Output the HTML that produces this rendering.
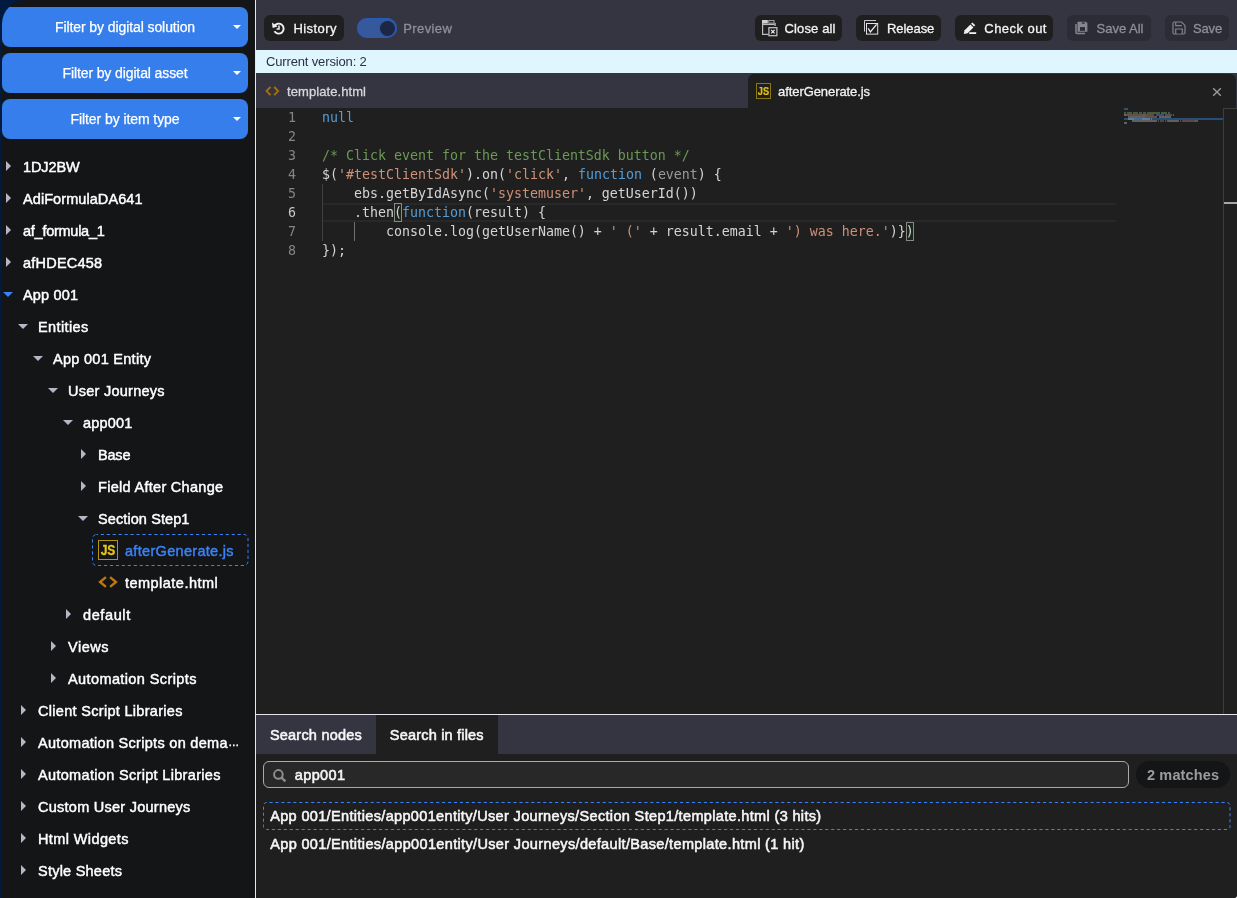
<!DOCTYPE html>
<html lang="en">
<head>
<meta charset="utf-8">
<title>Code editor</title>
<style>
*{box-sizing:border-box;margin:0;padding:0}
html,body{width:1237px;height:898px;overflow:hidden;background:#001a40;font-family:"Liberation Sans",sans-serif;color:#f2f2f5}
body{position:relative}
#side,#main{will-change:transform}
.abs{position:absolute}
/* ---------- sidebar ---------- */
#side{position:absolute;left:2px;top:0;width:253px;height:898px;background:#141517;border-top-left-radius:24px;overflow:hidden}
.fbtn{position:absolute;left:0;width:246px;height:40px;border-radius:8px;background:#357eec;color:#fff;font-size:14px;line-height:41px;text-align:center;padding-right:0;-webkit-text-stroke:.25px #fff}
.fbtn span{position:absolute;left:0;width:246px;text-align:center}
.fbtn u{text-decoration:none}
.fbtn i{position:absolute;left:231px;top:18px;width:0;height:0;border-left:4px solid transparent;border-right:4px solid transparent;border-top:4.5px solid #fff}
.row{position:absolute;left:0;width:253px;height:32px;line-height:32px;font-size:14.5px;white-space:nowrap;color:#fff;-webkit-text-stroke:.45px #fff}
.row b{font-weight:normal;position:absolute;top:0}
.ar,.ad{position:absolute;width:0;height:0}
.ar{top:10px;margin-left:-1.2px;border-top:5.25px solid transparent;border-bottom:5.25px solid transparent;border-left:5.5px solid #b6b6c6}
.ad{top:12.7px;margin-left:-.4px;border-left:5.4px solid transparent;border-right:5.4px solid transparent;border-top:5.7px solid #b6b6c6}
.sel{position:absolute;left:90px;top:0;width:156px;height:32px;border:1px dashed #3b82f6;border-radius:5px}
.jsi{position:absolute;left:96px;top:5px;width:20px;height:20px;border:1px solid #b3920f;font-style:normal}
.jsi em{position:absolute;left:-1px;top:0;width:20px;height:18px;line-height:18.6px;text-align:center;font-style:normal;font-weight:bold;font-size:14px;color:#e8c51b;-webkit-text-stroke:.3px #e8c51b;letter-spacing:0;transform:scaleX(.86)}
.hti{position:absolute;left:96px;top:9.4px}
/* ---------- main ---------- */
#vdiv{position:absolute;left:255px;top:0;width:1px;height:898px;background:#e6e6f0}
#main{position:absolute;left:256px;top:0;width:981px;height:898px;background:#1f1f1f;border-bottom-right-radius:3px;overflow:hidden}
#tb{position:absolute;left:0;top:0;width:981px;height:50px;background:#343541}
.btn{position:absolute;top:15px;height:26px;border-radius:6px;background:#1f1f1f;color:#f4f4f6;font-size:13px;line-height:27.8px;white-space:nowrap;-webkit-text-stroke:.3px #f4f4f6}
.btn.dis{background:#2b2c35;color:#8e8e9c;-webkit-text-stroke:.3px #8e8e9c}
.btn span{position:absolute;top:0}
.btn svg{position:absolute}
#banner{position:absolute;left:0;top:50px;width:981px;height:23px;background:#e0f6ff;color:#2b3140;font-size:13px;line-height:23px;padding-left:10px}
#tabs{position:absolute;left:0;top:73px;width:981px;height:35px;background:#343541}
.tt{position:absolute;top:0;height:35px;line-height:37.2px;font-size:13px;white-space:nowrap;color:#f2f2f4;-webkit-text-stroke:.3px #f2f2f4}
#ed{position:absolute;left:0;top:108px;width:981px;height:606px;background:#1f1f1f;font-family:"DejaVu Sans Mono","Liberation Mono",monospace;font-size:13.29px;color:#d4d4d4}
.ln{position:absolute;left:0;width:40px;text-align:right;height:19px;line-height:19.7px;color:#858585}
.cl{position:absolute;left:66px;height:19px;line-height:19.7px;white-space:pre}
#mm{position:absolute;left:868px;top:0;width:99px;height:606px}
#mm i{position:absolute;height:2px}
.dim{opacity:.67}
.k{color:#569cd6}.s{color:#ce9178}.c{color:#6a9955}
.bt{position:absolute;font-size:14.5px;white-space:nowrap;color:#f6f6f8;-webkit-text-stroke:.55px #f6f6f8}
#hdiv{position:absolute;left:0;top:714px;width:981px;height:1px;background:#e6e6f0}
#bp{position:absolute;left:0;top:715px;width:981px;height:183px;background:#1f1f1f;border-bottom-right-radius:3px}
</style>
</head>
<body>
<div id="side">
  <div class="fbtn" style="top:7px"><span><u style="--w:139.7;letter-spacing:-0.088px">Filter by digital solution</u></span><i></i></div>
  <div class="fbtn" style="top:53px"><span><u style="--w:124.6;letter-spacing:-0.114px">Filter by digital asset</u></span><i></i></div>
  <div class="fbtn" style="top:99px"><span><u style="--w:108.6;letter-spacing:-0.077px">Filter by item type</u></span><i></i></div>
  <div id="tree">
<div class="row" style="top:151px"><i class="ar" style="left:5px"></i><b style="left:21px;--w:56.2;letter-spacing:-0.104px">1DJ2BW</b></div>
<div class="row" style="top:183px"><i class="ar" style="left:5px"></i><b style="left:21px;--w:119;letter-spacing:0.073px">AdiFormulaDA641</b></div>
<div class="row" style="top:215px"><i class="ar" style="left:5px"></i><b style="left:21px;--w:81.3;letter-spacing:-0.258px">af_formula_1</b></div>
<div class="row" style="top:247px"><i class="ar" style="left:5px"></i><b style="left:21px;--w:78.6;letter-spacing:0.216px">afHDEC458</b></div>
<div class="row" style="top:279px"><i class="ad" style="left:1.5px;border-top-color:#3b82f6"></i><b style="left:21px;--w:54.5;letter-spacing:0.161px">App 001</b></div>
<div class="row" style="top:311px"><i class="ad" style="left:16.5px"></i><b style="left:36px;--w:49.8;letter-spacing:0.391px">Entities</b></div>
<div class="row" style="top:343px"><i class="ad" style="left:31.5px"></i><b style="left:51px;--w:97.5;letter-spacing:0.282px">App 001 Entity</b></div>
<div class="row" style="top:375px"><i class="ad" style="left:46.5px"></i><b style="left:66px;--w:96.1;letter-spacing:0.260px">User Journeys</b></div>
<div class="row" style="top:407px"><i class="ad" style="left:61.5px"></i><b style="left:81px;--w:48.9;letter-spacing:0.202px">app001</b></div>
<div class="row" style="top:439px"><i class="ar" style="left:80px"></i><b style="left:96px;--w:32.0;letter-spacing:-0.188px">Base</b></div>
<div class="row" style="top:471px"><i class="ar" style="left:80px"></i><b style="left:96px;--w:124.6;letter-spacing:0.294px">Field After Change</b></div>
<div class="row" style="top:503px"><i class="ad" style="left:76.5px"></i><b style="left:96px;--w:90.9;letter-spacing:0.092px">Section Step1</b></div>
<div class="row" style="top:535px"><svg class="abs" style="left:90px;top:-1px" width="157" height="32" viewBox="0 0 157 32"><rect x=".5" y=".5" width="155.5" height="31" rx="4" fill="none" stroke="#3b82f6" stroke-width="1" stroke-dasharray="3.2 2.75" stroke-dashoffset="1.7"/></svg><i class="jsi"><em>JS</em></i><b style="left:123px;color:#3b82f6;-webkit-text-stroke-color:#3b82f6;--w:108.1;letter-spacing:0.308px">afterGenerate.js</b></div>
<div class="row" style="top:567px"><svg class="hti" width="20" height="12" viewBox="0 0 20 12"><path d="M7.9 1.2 L2.1 6 L7.9 10.8 M12.1 1.2 L17.9 6 L12.1 10.8" fill="none" stroke="#bf780e" stroke-width="2.4"/></svg><b style="left:123px;--w:92.2;letter-spacing:0.471px">template.html</b></div>
<div class="row" style="top:599px"><i class="ar" style="left:65px"></i><b style="left:81px;--w:46.7;letter-spacing:0.609px">default</b></div>
<div class="row" style="top:631px"><i class="ar" style="left:50px"></i><b style="left:66px;--w:40.0;letter-spacing:0.520px">Views</b></div>
<div class="row" style="top:663px"><i class="ar" style="left:50px"></i><b style="left:66px;--w:127.9;letter-spacing:0.394px">Automation Scripts</b></div>
<div class="row" style="top:695px"><i class="ar" style="left:20px"></i><b style="left:36px;--w:144.0;letter-spacing:0.304px">Client Script Libraries</b></div>
<div class="row" style="top:727px"><i class="ar" style="left:20px"></i><b style="left:36px;--w:189;letter-spacing:0.294px">Automation Scripts on dema</b><b style="left:226.3px;top:-1px;font-size:11px;letter-spacing:0">…</b></div>
<div class="row" style="top:759px"><i class="ar" style="left:20px"></i><b style="left:36px;--w:182.0;letter-spacing:0.324px">Automation Script Libraries</b></div>
<div class="row" style="top:791px"><i class="ar" style="left:20px"></i><b style="left:36px;--w:151.8;letter-spacing:0.254px">Custom User Journeys</b></div>
<div class="row" style="top:823px"><i class="ar" style="left:20px"></i><b style="left:36px;--w:90.0;letter-spacing:0.389px">Html Widgets</b></div>
<div class="row" style="top:855px"><i class="ar" style="left:20px"></i><b style="left:36px;--w:83.5;letter-spacing:0.234px">Style Sheets</b></div>
  </div>
</div>
<div id="vdiv"></div>
<div class="abs" style="left:1231px;top:892px;width:6px;height:6px;background:#fff"></div>
<div id="main">
  <div id="tb">
    <div class="btn" style="left:8px;width:80px">
      <svg style="left:7px;top:6px" width="15" height="15" viewBox="0 0 15 15"><path d="M3.3 5.2 A5 5 0 1 1 3.4 10.3" fill="none" stroke="#f0f0f3" stroke-width="1.9"/><path d="M1 1.6 L1.6 6.9 L6.6 5.6 Z" fill="#f0f0f3"/><path d="M8 4.6 V8 H5.6" fill="none" stroke="#f0f0f3" stroke-width="1.5"/></svg>
      <span style="left:29.4px;--w:42.6;letter-spacing:0.441px">History</span></div>
    <div class="abs" style="left:101px;top:18px;width:40px;height:20px;border-radius:10px;background:#36599e;box-shadow:inset 0 0 0 1px #2859b4"><div class="abs" style="left:22.5px;top:2.5px;width:15px;height:15px;border-radius:8px;background:#1c2745;box-shadow:0 0 0 1px #2f55a0"></div></div>
    <div class="abs" style="left:147.3px;top:15px;height:26px;line-height:27.8px;font-size:13px;color:#8e8e9c;-webkit-text-stroke:.3px #8e8e9c;--w:48;letter-spacing:0.375px">Preview</div>
    <div class="btn" style="left:499px;width:87px">
      <svg style="left:7px;top:5px" width="16" height="17" viewBox="0 0 16 17"><path d="M.6 .4 V14.4 H6.4" fill="none" stroke="#bcbcc2" stroke-width="1.2"/><rect x=".1" y="-.1" width="5.7" height="3.6" fill="#d2d2d6"/><rect x="6.8" y=".4" width="5.2" height="2.7" fill="none" stroke="#b4b4ba" stroke-width=".9"/><path d="M0 4.4 H12.6" stroke="#bcbcc2" stroke-width="1.3"/><path d="M13.1 2.9 V6" stroke="#e0e0e4" stroke-width="1"/><rect x="6.9" y="7.7" width="8" height="8" fill="none" stroke="#c6c6ca" stroke-width="1.2"/><path d="M9.2 10 L12.6 13.4 M12.6 10 L9.2 13.4" stroke="#e6e6ea" stroke-width="1.2"/></svg>
      <span style="left:29.5px;--w:50.5;letter-spacing:0.143px">Close all</span></div>
    <div class="btn" style="left:600px;width:85px">
      <svg style="left:8px;top:5px" width="15" height="15" viewBox="0 0 15 15"><path d="M.5 11.6 V.5 H12" fill="none" stroke="#c8c8ce" stroke-width="1"/><rect x="2.5" y="3.5" width="11.2" height="10.6" fill="none" stroke="#e2e2e6" stroke-width="1"/><path d="M4.2 8.4 L6.4 12 L12.6 4.4" fill="none" stroke="#f0f0f3" stroke-width="1.3"/></svg>
      <span style="left:31.0px;--w:46.8;letter-spacing:-0.067px">Release</span></div>
    <div class="btn" style="left:699px;width:98px">
      <svg style="left:8px;top:7px" width="14" height="13" viewBox="0 0 14 13"><path d="M.8 12 L1.6 8.2 L7.4 2.4 L10.4 5.4 L4.6 11.2 Z" fill="#f0f0f3"/><path d="M8.1 1.7 L9.4 .4 L12.3 3.3 L11 4.6 Z" fill="#f0f0f3"/><path d="M6.2 11.1 H13.2" stroke="#f0f0f3" stroke-width="1.8"/></svg>
      <span style="left:29.3px;--w:61.7;letter-spacing:0.457px">Check out</span></div>
    <div class="btn dis" style="left:811px;width:84px">
      <svg style="left:8px;top:6px" width="13" height="14" viewBox="0 0 13 14"><path d="M1 3 V11.6 Q1 12.6 2 12.6 H10" fill="none" stroke="#868692" stroke-width="1.5"/><path d="M2.5 .7 H11 L12.4 2.1 V10.8 H2.5 Z" fill="#868692"/><rect x="6.8" y="1.4" width="3" height="1.3" fill="#2b2c35"/><rect x="5" y="6.1" width="5" height="3.7" fill="#2b2c35"/></svg>
      <span style="left:29.5px;--w:46.5;letter-spacing:0.002px">Save All</span></div>
    <div class="btn dis" style="left:909px;width:64px">
      <svg style="left:7px;top:6px" width="14" height="14" viewBox="0 0 14 14"><path d="M1 2.4 Q1 1 2.4 1 H9.6 L13 4.4 V11.6 Q13 13 11.6 13 H2.4 Q1 13 1 11.6 Z" fill="none" stroke="#82828e" stroke-width="1.2"/><path d="M3.7 1.2 V4.6 H9.8 M3.7 12.8 V8 H10.3 V12.8" fill="none" stroke="#82828e" stroke-width="1.2"/><rect x="5.4" y="9.4" width="3.2" height="3" fill="#22232b"/></svg>
      <span style="left:28.0px;--w:28.7;letter-spacing:-0.147px">Save</span></div>
  </div>
  <div id="banner"><span style="--w:100.3;letter-spacing:-0.149px">Current version: 2</span></div>
  <div id="tabs">
    <svg class="abs" style="left:9px;top:12px" width="16" height="12" viewBox="0 0 16 12"><path d="M5.5 1.9 L1.6 6.05 L5.5 10.2 M9.2 1.9 L13.1 6.05 L9.2 10.2" fill="none" stroke="#ad6e0e" stroke-width="1.9"/></svg>
    <div class="tt" style="left:31px;color:#d6d6dc;-webkit-text-stroke-color:#d6d6dc;--w:78.5;letter-spacing:0.079px">template.html</div>
    <div class="abs" style="left:492px;top:1px;width:488px;height:34px;background:#1f1f1f;border-radius:6px 6px 0 0"></div>
    <div class="abs" style="left:500px;top:10px;width:15px;height:16px;border:1px solid #8c7810"><div class="abs" style="left:-1px;top:0;width:15px;height:14px;line-height:14.6px;text-align:center;font-weight:bold;font-size:10.5px;color:#e2c114;-webkit-text-stroke:.2px #e2c114;transform:scaleX(.88)">JS</div></div>
    <div class="tt" style="left:522px;--w:91.6;letter-spacing:-0.075px">afterGenerate.js</div>
    <svg class="abs" style="left:956px;top:14px" width="10" height="10" viewBox="0 0 10 10"><path d="M1.2 1.2 L8.8 8.8 M8.8 1.2 L1.2 8.8" stroke="#9a9a9a" stroke-width="1.4"/></svg>
  </div>
  <div id="ed">
    <div class="abs" style="left:66px;top:95px;width:794px;height:19px;border-top:2px solid #282828;border-bottom:2px solid #282828"></div>
    <div class="abs" style="left:66px;top:76px;width:1px;height:57px;background:#404040"></div>
    <div class="abs" style="left:98px;top:114px;width:1px;height:19px;background:#707070"></div>
    <div class="abs" style="left:138px;top:95px;width:8px;height:19px;border:1px solid #888;background:rgba(0,100,0,.1)"></div>
    <div class="abs" style="left:650px;top:114px;width:8px;height:19px;border:1px solid #888;background:rgba(0,100,0,.1)"></div>
    <div class="ln" style="top:0px;color:#858585">1</div><div class="cl" style="top:0px"><span class="k">null</span></div>
    <div class="ln" style="top:19px;color:#858585">2</div><div class="cl" style="top:19px"></div>
    <div class="ln" style="top:38px;color:#858585">3</div><div class="cl" style="top:38px"><span class="c">/* Click event for the testClientSdk button */</span></div>
    <div class="ln" style="top:57px;color:#858585">4</div><div class="cl" style="top:57px">$(<span class="s">'#testClientSdk'</span>).on(<span class="s">'click'</span>, <span class="k">function</span> (<span class="dim">event</span>) {</div>
    <div class="ln" style="top:76px;color:#858585">5</div><div class="cl" style="top:76px">    ebs.getByIdAsync(<span class="s">'systemuser'</span>, getUserId())</div>
    <div class="ln" style="top:95px;color:#c6c6c6">6</div><div class="cl" style="top:95px">    .then(<span class="k">function</span>(result) {</div>
    <div class="ln" style="top:114px;color:#858585">7</div><div class="cl" style="top:114px">        console.log(getUserName() + <span class="s">' ('</span> + result.email + <span class="s">') was here.'</span>)})</div>
    <div class="ln" style="top:133px;color:#858585">8</div><div class="cl" style="top:133px">});</div>
    <div id="mm">
      <div class="abs" style="left:0;top:10px;width:99px;height:2px;background:#264f78"></div>
      <i style="left:0px;top:0px;width:4px;background:#569cd6;opacity:0.39"></i>
      <i style="left:0px;top:4px;width:2px;background:#6a9955;opacity:.5"></i>
      <i style="left:3px;top:4px;width:5px;background:#6a9955;opacity:.5"></i>
      <i style="left:9px;top:4px;width:5px;background:#6a9955;opacity:.5"></i>
      <i style="left:15px;top:4px;width:3px;background:#6a9955;opacity:.5"></i>
      <i style="left:19px;top:4px;width:3px;background:#6a9955;opacity:.5"></i>
      <i style="left:23px;top:4px;width:13px;background:#6a9955;opacity:.5"></i>
      <i style="left:37px;top:4px;width:6px;background:#6a9955;opacity:.5"></i>
      <i style="left:44px;top:4px;width:2px;background:#6a9955;opacity:.5"></i>
      <i style="left:0px;top:6px;width:2px;background:#d4d4d4;opacity:0.39"></i>
      <i style="left:2px;top:6px;width:16px;background:#ce9178;opacity:0.41"></i>
      <i style="left:18px;top:6px;width:5px;background:#d4d4d4;opacity:0.33"></i>
      <i style="left:23px;top:6px;width:7px;background:#ce9178;opacity:0.39"></i>
      <i style="left:32px;top:6px;width:8px;background:#569cd6;opacity:0.41"></i>
      <i style="left:41px;top:6px;width:7px;background:#d4d4d4;opacity:0.28"></i>
      <i style="left:49px;top:6px;width:1px;background:#d4d4d4;opacity:0.33"></i>
      <i style="left:4px;top:8px;width:17px;background:#d4d4d4;opacity:0.36"></i>
      <i style="left:21px;top:8px;width:12px;background:#ce9178;opacity:0.41"></i>
      <i style="left:35px;top:8px;width:12px;background:#d4d4d4;opacity:0.36"></i>
      <i style="left:4px;top:10px;width:6px;background:#d4d4d4;opacity:0.33"></i>
      <i style="left:10px;top:10px;width:8px;background:#569cd6;opacity:0.39"></i>
      <i style="left:18px;top:10px;width:8px;background:#d4d4d4;opacity:0.33"></i>
      <i style="left:27px;top:10px;width:1px;background:#d4d4d4;opacity:0.33"></i>
      <i style="left:8px;top:12px;width:25px;background:#d4d4d4;opacity:0.36"></i>
      <i style="left:34px;top:12px;width:1px;background:#d4d4d4;opacity:0.28"></i>
      <i style="left:36px;top:12px;width:4px;background:#ce9178;opacity:0.33"></i>
      <i style="left:41px;top:12px;width:1px;background:#d4d4d4;opacity:0.28"></i>
      <i style="left:43px;top:12px;width:12px;background:#d4d4d4;opacity:0.36"></i>
      <i style="left:56px;top:12px;width:1px;background:#d4d4d4;opacity:0.28"></i>
      <i style="left:58px;top:12px;width:13px;background:#ce9178;opacity:0.36"></i>
      <i style="left:71px;top:12px;width:3px;background:#d4d4d4;opacity:0.33"></i>
      <i style="left:0px;top:14px;width:3px;background:#d4d4d4;opacity:0.36"></i>
    </div>
    <div class="abs" style="left:967px;top:0;width:14px;height:606px;border-left:1px solid #3d3d3d;border-top:1px solid #3d3d3d"></div>
    <div class="abs" style="left:968px;top:94px;width:13px;height:2px;background:#a6a6a6"></div>
  </div>
  <div id="hdiv"></div>
  <div id="bp">
    <div class="abs" style="left:0;top:0;width:981px;height:39px;background:#343541"></div>
    <div class="abs" style="left:120px;top:0;width:122px;height:39px;background:#1f1f1f"></div>
    <div class="bt" style="left:13.9px;top:0;height:39px;line-height:40px;--w:91.4;letter-spacing:0.220px">Search nodes</div>
    <div class="bt" style="left:133.8px;top:0;height:39px;line-height:40px;--w:93.3;letter-spacing:0.194px">Search in files</div>
    <div class="abs" style="left:7px;top:46px;width:866px;height:27px;border:1px solid #a9a9a9;border-radius:6px;background:#282828"></div>
    <svg class="abs" style="left:16px;top:53px" width="15" height="15" viewBox="0 0 15 15"><circle cx="6.4" cy="6.4" r="4.3" fill="none" stroke="#8e8e8e" stroke-width="2"/><path d="M9.6 9.6 L13.4 13.4" stroke="#8e8e8e" stroke-width="2.2"/></svg>
    <div class="bt" style="left:38.8px;top:46px;height:27px;line-height:28px;--w:49.7;letter-spacing:0.362px">app001</div>
    <div class="abs" style="left:880px;top:46px;width:94px;height:27px;border-radius:14px;background:#141517"></div>
    <div class="abs" style="left:891px;top:46px;height:27px;line-height:28px;font-size:14.5px;font-weight:bold;color:#9c9c9c;white-space:nowrap;--w:71.5;letter-spacing:0.133px">2 matches</div>
    <svg class="abs" style="left:7px;top:87px" width="968" height="28" viewBox="0 0 968 28"><rect x=".5" y=".5" width="966.5" height="27" rx="3" fill="none" stroke="#3b82f6" stroke-width="1" stroke-dasharray="3.2 2.75" stroke-dashoffset="3"/></svg>
    <div class="bt" style="left:14.2px;top:87px;height:28px;line-height:29px;--w:550.5;letter-spacing:0.343px">App 001/Entities/app001entity/User Journeys/Section Step1/template.html (3 hits)</div>
    <div class="bt" style="left:14.2px;top:115px;height:28px;line-height:29px;--w:533.6;letter-spacing:0.352px">App 001/Entities/app001entity/User Journeys/default/Base/template.html (1 hit)</div>
  </div>
</div>
</body>
</html>
